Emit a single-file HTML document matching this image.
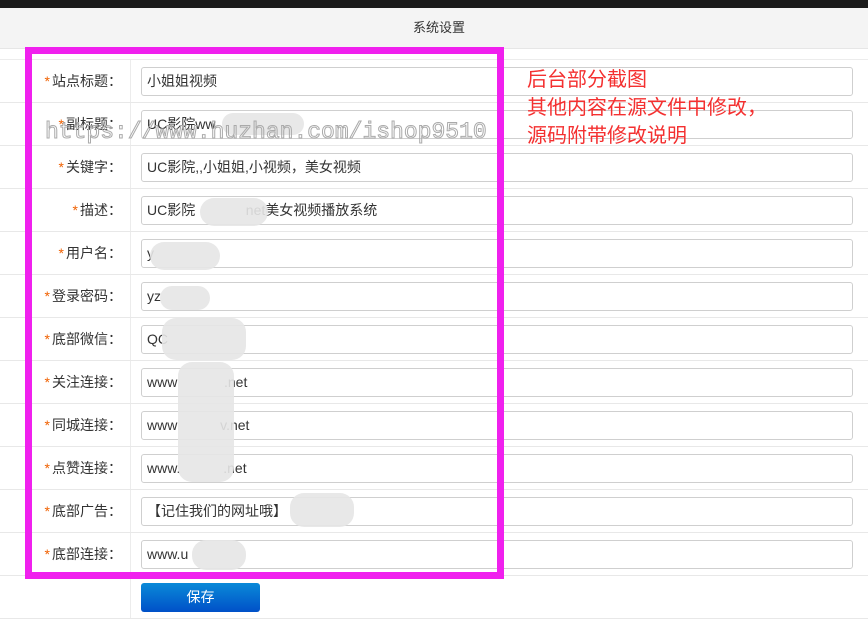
<!DOCTYPE html>
<html><head><meta charset="utf-8"><style>
body{margin:0;width:868px;height:626px;background:#fff;font-family:"Liberation Sans","Noto Sans CJK SC",sans-serif;position:relative;overflow:hidden}
.top{position:absolute;left:0;top:0;width:868px;height:8px;background:#1b1b1b}
.hd{position:absolute;left:0;top:8px;width:868px;height:40px;background:#f4f4f4;border-bottom:1px solid #e6e6e6;font-size:13px;color:#333;text-align:center;line-height:40px;text-indent:10px}
.row{position:absolute;left:0;width:868px;height:42px;border-bottom:1px solid #e8e8e8}
.lab{position:absolute;left:0;width:122px;text-align:right;font-size:14px;color:#333;line-height:42px}
.lab i{font-style:normal;color:#f06000;margin-right:2px}
.vl{position:absolute;left:130px;top:0;width:1px;height:100%;background:#ececec}
.in{position:absolute;left:141px;top:7px;width:705px;height:27px;border:1px solid #cfcfcf;border-radius:3px;font-size:14px;color:#333;line-height:27px;padding-left:5px;box-sizing:content-box}
.box{position:absolute;left:25px;top:47px;width:465px;height:518px;border:7px solid #f020ee}
.red{position:absolute;left:527px;top:66px;font-size:20px;color:#f43030;line-height:28px}
.wm{position:absolute;left:45px;top:119px;font-family:"Liberation Mono",monospace;font-size:23px;color:transparent;-webkit-text-stroke:1px #aaa}
.blob{position:absolute;background:#e6e6e6;border-radius:14px;opacity:.9}
.btn{position:absolute;left:141px;top:583px;width:119px;height:29px;border-radius:3px;background:linear-gradient(#0a8ad8,#0050c8);color:#fff;font-size:14px;text-align:center;line-height:29px}
</style></head><body>
<div class="top"></div>
<div class="hd">系统设置</div>
<div class="row" style="top:59px;height:1px;border:0;background:#ececec"></div>
<div class="row" style="top:60px"><div class="vl"></div><div class="lab"><i>*</i>站点标题：</div><div class="in">小姐姐视频</div></div>
<div class="row" style="top:103px"><div class="vl"></div><div class="lab"><i>*</i>副标题：</div><div class="in">UC影院ww</div></div>
<div class="row" style="top:146px"><div class="vl"></div><div class="lab"><i>*</i>关键字：</div><div class="in">UC影院,,小姐姐,小视频，美女视频</div></div>
<div class="row" style="top:189px"><div class="vl"></div><div class="lab"><i>*</i>描述：</div><div class="in">UC影院 &nbsp; &nbsp; &nbsp; &nbsp; &nbsp; &nbsp; net美女视频播放系统</div></div>
<div class="row" style="top:232px"><div class="vl"></div><div class="lab"><i>*</i>用户名：</div><div class="in">y</div></div>
<div class="row" style="top:275px"><div class="vl"></div><div class="lab"><i>*</i>登录密码：</div><div class="in">yz</div></div>
<div class="row" style="top:318px"><div class="vl"></div><div class="lab"><i>*</i>底部微信：</div><div class="in">QC</div></div>
<div class="row" style="top:361px"><div class="vl"></div><div class="lab"><i>*</i>关注连接：</div><div class="in">www &nbsp; &nbsp; &nbsp; &nbsp; &nbsp; &nbsp;.net</div></div>
<div class="row" style="top:404px"><div class="vl"></div><div class="lab"><i>*</i>同城连接：</div><div class="in">www &nbsp; &nbsp; &nbsp; &nbsp; &nbsp; v.net</div></div>
<div class="row" style="top:447px"><div class="vl"></div><div class="lab"><i>*</i>点赞连接：</div><div class="in">www. &nbsp; &nbsp; &nbsp; &nbsp; &nbsp; .net</div></div>
<div class="row" style="top:490px"><div class="vl"></div><div class="lab"><i>*</i>底部广告：</div><div class="in">【记住我们的网址哦】</div></div>
<div class="row" style="top:533px"><div class="vl"></div><div class="lab"><i>*</i>底部连接：</div><div class="in">www.u</div></div>
<div class="row" style="top:576px"><div class="vl"></div></div>
<div class="blob" style="left:222px;top:113px;width:82px;height:22px"></div>
<div class="blob" style="left:200px;top:198px;width:68px;height:28px"></div>
<div class="blob" style="left:150px;top:242px;width:70px;height:28px"></div>
<div class="blob" style="left:160px;top:286px;width:50px;height:24px"></div>
<div class="blob" style="left:162px;top:318px;width:84px;height:42px"></div>
<div class="blob" style="left:178px;top:362px;width:56px;height:120px"></div>
<div class="blob" style="left:290px;top:493px;width:64px;height:34px"></div>
<div class="blob" style="left:192px;top:540px;width:54px;height:30px"></div>
<div class="wm">https://www.huzhan.com/ishop9510</div>
<div class="box"></div>
<div class="red">后台部分截图<br>其他内容在源文件中修改，<br>源码附带修改说明</div>
<div class="btn">保存</div>
</body></html>
